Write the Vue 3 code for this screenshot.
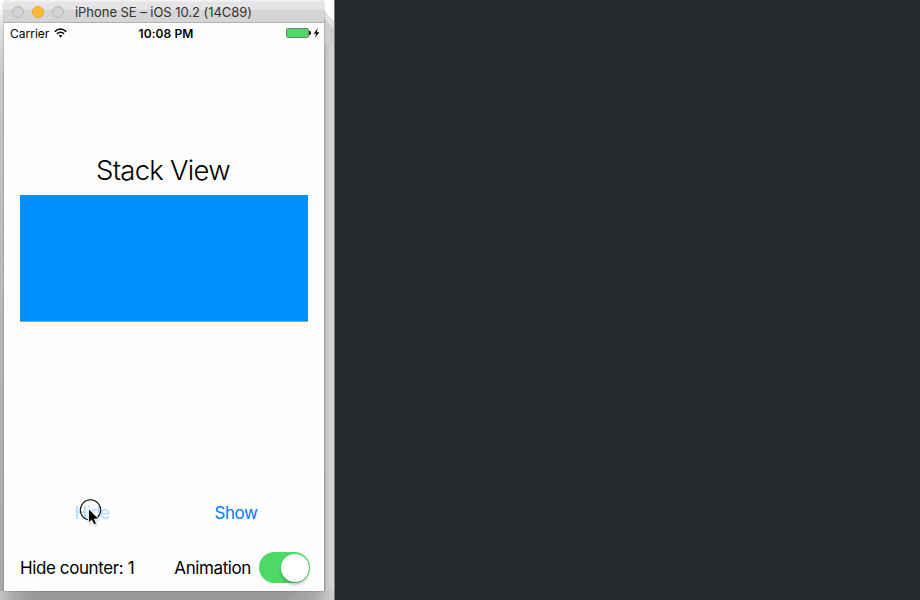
<script setup>
import { ref } from 'vue'

const hideCount = ref(1)
const animated = ref(true)
</script>

<template>
  <main class="desktop">
    <section class="capture">
      <div class="window">
        <header class="titlebar">
          <i class="light"></i>
          <i class="light amber"></i>
          <i class="light"></i>
          <span class="window-title">iPhone SE – iOS 10.2 (14C89)</span>
        </header>
        <div class="screen">
          <div class="status">
            <div class="carrier">
              <span>Carrier</span>
              <svg width="13" height="10" viewBox="0 0 13 10" fill="none" stroke="#000" stroke-width="1.5">
                <path d="M.8 3.6Q6.5-1.6 12.2 3.6" />
                <path d="M2.9 5.9Q6.5 2.7 10.1 5.9" />
                <path d="M6.5 9.4 4.6 7.4Q6.5 5.9 8.4 7.4Z" fill="#000" stroke="none" />
              </svg>
            </div>
            <span class="time">10:08 PM</span>
            <div class="power">
              <svg width="34" height="12" viewBox="0 0 34 12">
                <rect x=".5" y="1.5" width="22" height="9" rx="1" fill="#fff" stroke="#777" />
                <rect x="1" y="2" width="21" height="8" fill="#4cd964" />
                <path d="M23.2 3.8h.6Q25 4.4 25 6t-1.2 2.2h-.6z" fill="#000" />
                <path d="M31.9 1 27.6 6.7h2.6l-1.5 4.3 4.6-5.8h-2.7z" fill="#000" />
              </svg>
            </div>
          </div>
          <h1 class="heading">Stack View</h1>
          <div class="panel"></div>
          <div class="actions">
            <div class="action">
              <button class="link pressed">Hide</button>
              <svg class="pointer" width="26" height="30" viewBox="0 0 26 30">
                <circle cx="12.5" cy="12" r="10.2" fill="none" stroke="#111" stroke-width="1.1" />
                <path d="M10.7 11.5v16l3.6-3.1 2.1 4.5 3.2-1.3-2.1-4.4h4.6z" fill="#888" opacity=".25" />
                <path d="M10.5 10.6v14.3l3.2-2.8 2.2 4.7 2.7-1.2-2.2-4.5h4.5z" fill="#000" stroke="#fff" stroke-width=".9" />
              </svg>
            </div>
            <div class="action"><button class="link show">Show</button></div>
          </div>
          <footer class="controls">
            <span class="counter">Hide counter: {{ hideCount }}</span>
            <span class="animation">Animation</span>
            <button class="switch" :class="{ on: animated }" aria-label="Animation"><i></i></button>
          </footer>
        </div>
      </div>
    </section>
  </main>
</template>

<style>
body { margin: 0; background: #25292c; }
</style>

<style scoped>
.desktop {
  width: 920px;
  height: 600px;
  overflow: hidden;
  background: #25292c;
  font-family: Inter, "Liberation Sans", sans-serif;
  color: #000;
}
.capture {
  box-sizing: border-box;
  width: 335px;
  height: 600px;
  padding: 0 0 0 4px;
  border-right: 1px solid #777b7d;
  overflow: hidden;
  background:
    linear-gradient(to right, transparent 324px, #b6b6b6 325px, #c9c9c9 327px, #cbcbcb 330px, #d5d5d5 331px) 0 44px / 334px 547px no-repeat,
    linear-gradient(48deg, #cecece 0 46%, #e4e2e4 48% 60%, #fff 63%) 324px 0 / 10px 44px no-repeat,
    linear-gradient(100deg, #c4c4c4 0, #aaa 15px, #999 35px, #999 280px, #aaa 310px, #ccc 328px) 0 591px / 334px 9px no-repeat,
    linear-gradient(#fff 0, #ddd 30px, #c7c7c7 80px, #aaa 570px);
}
.window {
  width: 320px;
  height: 591px;
  box-shadow: 0 0 2px rgba(0, 0, 0, .45);
  border-radius: 5px 5px 0 0;
}
.titlebar {
  box-sizing: border-box;
  display: flex;
  align-items: center;
  height: 23px;
  padding: 1px 0 0 8px;
  gap: 8px;
  border-bottom: 1px solid #b1b1b1;
  border-radius: 5px 5px 0 0;
  background: linear-gradient(#f4f2f4 0 1px, #e7e4e7 2px 9px, #d5d5d5 10px);
}
.light {
  box-sizing: border-box;
  width: 12px;
  height: 12px;
  border: 1px solid #b8b8b8;
  border-radius: 50%;
  background: #d4d3d4;
}
.amber { background: #ffbd2e; border-color: #e9a83a; }
.window-title { margin-left: 3px; font-size: 13px; line-height: 18px; letter-spacing: -.04px; color: #333; white-space: nowrap; }
.screen {
  display: flex;
  flex-direction: column;
  height: 568px;
  background: #fefefe;
}
.status {
  display: grid;
  grid-template-columns: 1fr auto 1fr;
  height: 20px;
  padding: 0 4px 0 6px;
  align-items: center;
  font-size: 12px;
  line-height: 20px;
}
.carrier { display: flex; align-items: center; gap: 5px; }
.carrier span, .time { padding-top: 1px; line-height: 19px; }
.time { padding-left: 2px; font-weight: 600; letter-spacing: .1px; }
.power { display: flex; justify-content: flex-end; }
.heading {
  margin: 107px 0 0;
  height: 45px;
  padding-right: 2px;
  line-height: 40px;
  font-size: 27.5px;
  font-weight: 300;
  letter-spacing: -.75px;
  text-align: center;
}
.panel {
  box-sizing: border-box;
  height: 127px;
  margin: 0 16px;
  background: #0091ff;
  border-bottom: 1px solid #b99a5c;
}
.actions { display: grid; grid-template-columns: 1fr 1fr; height: 36px; margin: 173px 16px 0; }
.action { position: relative; display: flex; justify-content: center; align-items: center; }
.link, .switch { padding: 0; border: 0; background: none; font-family: inherit; }
.link { font-size: 17px; line-height: 22px; letter-spacing: -.5px; color: #007aff; }
.pressed { color: #b2d7ff; }
.pointer { position: absolute; left: 58px; top: 3px; }
.controls {
  display: flex;
  align-items: center;
  height: 31px;
  margin-top: 21px;
  padding: 0 14px 0 16px;
  font-size: 17px;
  line-height: 22px;
  letter-spacing: -.4px;
}
.counter { flex: 1; }
.counter, .animation { padding-top: 1px; }
.switch {
  box-sizing: border-box;
  display: flex;
  width: 51px;
  height: 31px;
  margin-left: 8px;
  padding: 1.5px;
  border-radius: 16px;
  background: #ddd;
}
.switch.on { justify-content: flex-end; background: #4cd964; }
.switch i { width: 28px; height: 28px; border-radius: 50%; background: #fff; box-shadow: 0 3px 3px rgba(0, 0, 0, .22); }
</style>
